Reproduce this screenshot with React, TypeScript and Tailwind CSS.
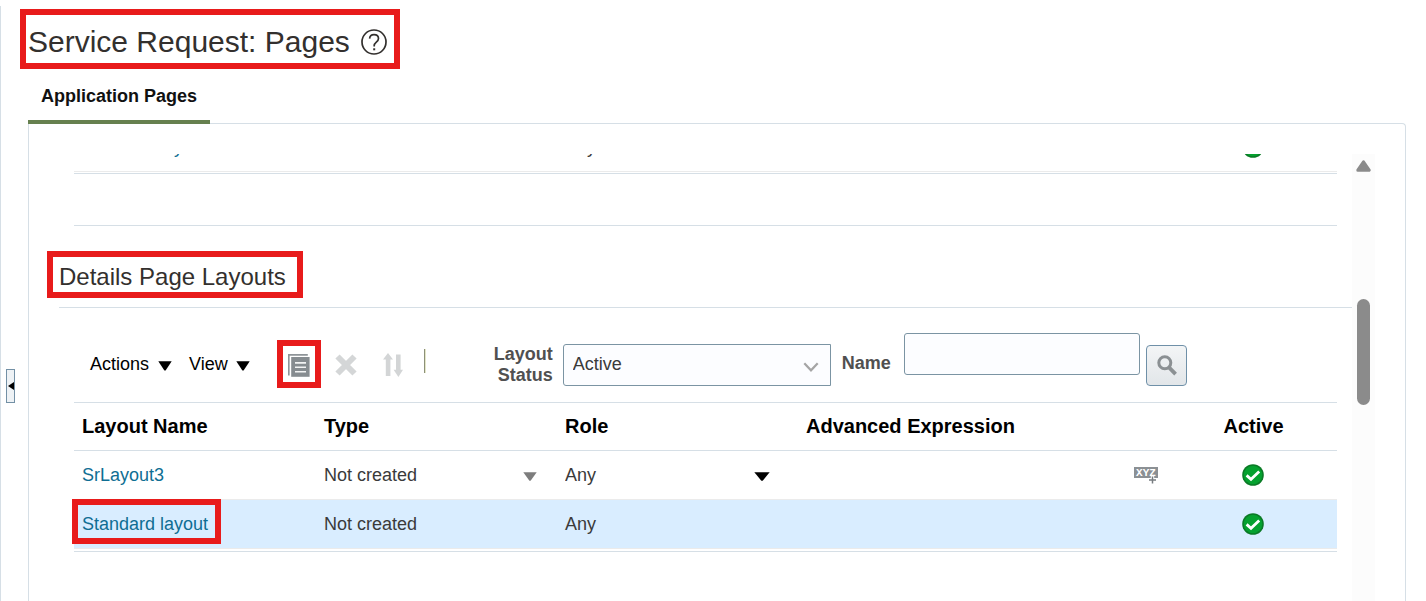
import React from "react";

type Layout = { id: string; name: string; type: string; role: string };

const layouts: Layout[] = [
  { id: "sr3", name: "SrLayout3", type: "Not created", role: "Any" },
  { id: "std", name: "Standard layout", type: "Not created", role: "Any" },
];

function CaretDown({ className }: { className: string }) {
  return (
    <svg viewBox="0 0 14 10" preserveAspectRatio="none" className={className} aria-hidden="true">
      <path d="M0.3 0.3h13.4L7.6 9.6H6.4z" fill="currentColor" />
    </svg>
  );
}

function ActiveIcon() {
  return (
    <svg viewBox="0 0 22 22" className="mx-auto block h-[22px] w-[22px]" role="img" aria-label="Active">
      <circle cx="11" cy="11" r="10.8" fill="#0b7a26" />
      <circle cx="11" cy="11" r="9.3" fill="#05a12f" />
      <path d="M4.6 11.4 9 15.3 17.2 7.6" fill="none" stroke="#fff" strokeWidth="2.8" />
    </svg>
  );
}

function HelpIcon() {
  return (
    <svg viewBox="0 0 26 26" className="h-[26px] w-[26px]" fill="none" stroke="#33302e" aria-hidden="true">
      <circle cx="13" cy="13" r="12" strokeWidth="1.7" />
      <path d="M8.6 9.6C8.8 7 10.6 5.7 13 5.7c2.6 0 4.5 1.5 4.5 3.9 0 3.4-4.3 3.7-4.3 7v1" strokeWidth="1.7" />
      <path d="M12.2 20.3h2" strokeWidth="2" />
    </svg>
  );
}

function CreateIcon() {
  return (
    <svg viewBox="0 0 22 23" className="h-[23px] w-[22px]" aria-hidden="true">
      <path d="M0.8 21.5V0.9h19" fill="none" stroke="#8e9498" strokeWidth="1.7" />
      <path d="M3.2 3h18.4v19.8H3.2z" fill="#868c90" />
      <path d="M7 8.9h11M7 13.2h11M7 17.7h11" stroke="#f2f3f3" strokeWidth="1.6" />
    </svg>
  );
}

function DeleteIcon() {
  return (
    <svg viewBox="0 0 22 22" className="h-[22px] w-[22px]" aria-hidden="true">
      <path d="M2.5 2.5 19.5 19.5M19.5 2.5 2.5 19.5" stroke="#d4d6d7" strokeWidth="6" />
    </svg>
  );
}

function ReorderIcon() {
  return (
    <svg viewBox="0 0 20 24" className="h-6 w-5" fill="#d3d5d6" aria-hidden="true">
      <path d="M5 0 10 6.6H7.4V23H2.8V6.6H0zM13 1.5h4.6v15.2H20L15.4 24l-4.8-7.3H13z" />
    </svg>
  );
}

function SearchIcon() {
  return (
    <svg viewBox="0 0 20 21" className="h-[21px] w-5" fill="none" stroke="#8b9093" aria-hidden="true">
      <circle cx="7.8" cy="7.8" r="6" strokeWidth="3" />
      <path d="M12.2 12.7 18.6 19.2" strokeWidth="3.8" />
    </svg>
  );
}

function ExpressionIcon() {
  return (
    <svg viewBox="0 0 24 18" className="h-[18px] w-6" aria-hidden="true">
      <path d="M0 1h24v11H0z" fill="#8b9094" />
      <text x="12" y="10.4" textAnchor="middle" fill="#fff" fontSize="11" fontWeight="700" fontFamily="Liberation Mono, monospace">
        XYZ
      </text>
      <path d="M14.5 14h8M18.5 10v8" stroke="#fff" strokeWidth="3.4" />
      <path d="M15 14h7M18.5 10.6V17.6" stroke="#777c80" strokeWidth="1.5" />
    </svg>
  );
}

function Columns() {
  return (
    <colgroup>
      <col className="w-[242px]" />
      <col className="w-[241px]" />
      <col className="w-[241px]" />
      <col />
      <col className="w-[167px]" />
    </colgroup>
  );
}

function CellSelect({ label, value, children, className }: { label: string; value: string; children: React.ReactNode; className: string }) {
  return (
    <span className={"grid items-center " + className}>
      <select aria-label={label} defaultValue={value} className="col-start-1 row-start-1 w-full appearance-none bg-transparent">
        <option>{value}</option>
      </select>
      <span className="pointer-events-none col-start-1 row-start-1 justify-self-end pt-1">{children}</span>
    </span>
  );
}

export default function App() {
  return (
    <div className="flex min-h-screen bg-white font-['Liberation_Sans',Arial,sans-serif] text-lg leading-6 text-[#3a3a3a]">
      <aside className="mt-[6px] w-5 shrink-0 border-l border-[#d6dfe6] pt-[363px] pl-[5px]">
        <button aria-label="Collapse pane" className="flex h-[34px] w-[9px] items-center justify-end border border-[#7390a5] bg-[#eef2f5]">
          <svg viewBox="0 0 6 8" className="h-2 w-[6px]" aria-hidden="true">
            <path d="M0 4 6 0v8z" fill="#000" />
          </svg>
        </button>
      </aside>

      <main className="flex min-w-0 grow flex-col pt-[9px] pr-5">
        <header className="flex h-[60px] w-fit items-center gap-[11px] border-6 border-[#e81b1b] pt-[6px] pr-[7px] pl-[2px]">
          <h1 className="pb-[1px] text-[30px] leading-10 whitespace-nowrap text-[#33302e]">Service Request: Pages</h1>
          <button aria-label="Help">
            <HelpIcon />
          </button>
        </header>

        <nav className="z-10 mt-[13px] -mb-px ml-2 flex">
          <a href="#application-pages" className="h-[42px] border-b-4 border-[#66804f] px-[13px] pt-[2px] font-bold text-[#111]">
            Application Pages
          </a>
        </nav>

        <section className="ml-2 flex grow rounded-tr border-x border-t border-[#d6dfe6] pt-[30px] pr-[30px]">
          <div className="min-w-0 grow pl-[18px]">
            <div className="mr-[15px] ml-[27px] border-b border-[#d6dfe6] pb-px">
              <div className="flex h-[18px] items-end overflow-hidden">
                <table aria-label="Page layouts" className="w-full table-fixed">
                  <Columns />
                  <tbody>
                    <tr className="h-[49px] border-b border-[#ebebeb]">
                      <td className="px-2">
                        <a href="#layout" className="text-[#0f6e93]">Standard layout</a>
                      </td>
                      <td className="px-2">Not created</td>
                      <td className="px-2">Any</td>
                      <td />
                      <td className="pr-[2px]">
                        <ActiveIcon />
                      </td>
                    </tr>
                  </tbody>
                </table>
              </div>
            </div>
            <div className="mr-[15px] ml-[27px] h-[52px] border-b border-[#d6dfe6]" />

            <h2 className="mt-[25px] flex h-[47px] w-fit items-center border-6 border-[#e81b1b] pt-1 pr-[11px] pl-[6px] text-2xl text-[#33302e]">
              Details Page Layouts
            </h2>

            <div className="mt-[9px] ml-3 border-t border-[#d6dfe6] pr-[15px] pl-[15px]">
              <div className="flex pt-[25px] pb-[5px] pl-4">
                <div className="flex h-16 items-center whitespace-nowrap">
                  <button className="flex items-center gap-[9px] pb-[2px] text-black">
                    Actions <CaretDown className="mt-1 h-[10px] w-[14px]" />
                  </button>
                  <button className="ml-[17px] flex items-center gap-2 pb-[2px] text-black">
                    View <CaretDown className="mt-1 h-[10px] w-[14px]" />
                  </button>
                  <button aria-label="Create" className="mb-[2px] ml-[27px] flex h-12 w-11 items-center justify-center border-6 border-[#e81b1b] pt-[2px]">
                    <CreateIcon />
                  </button>
                  <button aria-label="Delete" className="ml-[14px]">
                    <DeleteIcon />
                  </button>
                  <button aria-label="Reorder" className="ml-[26px]">
                    <ReorderIcon />
                  </button>
                  <span className="mb-2 ml-[21px] h-6 w-[2px] border-r border-l border-r-[#e4e6c8] border-l-[#8c9078]" />
                  <label htmlFor="status" className="ml-[65px] w-[62px] text-right leading-[21px] font-bold whitespace-normal text-[#505050]">
                    Layout Status
                  </label>
                  <span className="ml-[10px] grid w-[268px] items-center">
                    <select id="status" defaultValue="Active" className="col-start-1 row-start-1 h-[42px] w-full appearance-none rounded-l-[3px] border border-[#7b94a3] bg-[#fcfdff] pb-[2px] pl-[9px]">
                      <option>Active</option>
                      <option>Inactive</option>
                    </select>
                    <svg viewBox="0 0 16 10" className="pointer-events-none col-start-1 row-start-1 mt-[3px] mr-3 h-[10px] w-4 justify-self-end" aria-hidden="true">
                      <path d="M1.3 1.3 8 8.3l6.7-7" fill="none" stroke="#a5a5a5" strokeWidth="2.2" />
                    </svg>
                  </span>
                  <label htmlFor="name" className="ml-[11px] pb-1 font-bold text-[#505050]">
                    Name
                  </label>
                  <input id="name" type="text" className="ml-[13px] h-[42px] w-[236px] self-start rounded-[3px] border border-[#7b94a3] bg-[#fcfdff] px-2" />
                  <button aria-label="Search" className="ml-[6px] flex h-[41px] w-[41px] items-center justify-center rounded-[4px] border border-[#6f90a8] bg-linear-to-b from-[#f3f5f6] to-[#e2e6e9] pl-[2px]">
                    <SearchIcon />
                  </button>
                </div>
              </div>

              <div className="border-y border-[#d6dfe6] pb-[2px]">
                <table aria-label="Details page layouts" className="w-full table-fixed text-left">
                  <Columns />
                  <thead>
                    <tr className="h-[47px] border-b border-[#d6dfe6] text-xl text-black">
                      <th className="px-2">Layout Name</th>
                      <th className="px-2">Type</th>
                      <th className="px-2">Role</th>
                      <th className="px-2">Advanced Expression</th>
                      <th className="text-center">Active</th>
                    </tr>
                  </thead>
                  <tbody>
                    {layouts.map((layout) => {
                      const selected = layout.id === "std";
                      return (
                        <tr key={layout.id} className={selected ? "h-[49px] border-b border-[#ebebeb] bg-[#d9edff]" : "h-[49px] border-b border-[#ebebeb]"}>
                          <td className="px-2">
                            <a href="#layout" className="relative inline-block text-[#0f6e93]">
                              {layout.name}
                              {selected && <span className="absolute -top-[13px] -right-[13px] -bottom-2 -left-[10px] border-6 border-[#e81b1b]" />}
                            </a>
                          </td>
                          <td className="px-2">
                            {selected ? layout.type : (
                              <CellSelect label="Type" value={layout.type} className="w-[213px]">
                                <CaretDown className="h-[9px] w-[14px] text-[#7d7d7d]" />
                              </CellSelect>
                            )}
                          </td>
                          <td className="px-2">
                            {selected ? layout.role : (
                              <CellSelect label="Role" value={layout.role} className="w-[205px]">
                                <CaretDown className="h-[9px] w-4 text-black" />
                              </CellSelect>
                            )}
                          </td>
                          <td>
                            {!selected && (
                              <button aria-label="Edit expression" className="mr-3 ml-auto block">
                                <ExpressionIcon />
                              </button>
                            )}
                          </td>
                          <td className="pr-[2px]">
                            <ActiveIcon />
                          </td>
                        </tr>
                      );
                    })}
                  </tbody>
                </table>
              </div>
            </div>
          </div>

          <div className="flex w-[23px] shrink-0 flex-col items-center bg-[#fcfcfc] pt-[6px]" aria-hidden="true">
            <svg viewBox="0 0 15 12" className="h-3 w-[15px]">
              <path d="M7.5 1.8 13.2 10.2H1.8z" fill="#8b8b8b" stroke="#8b8b8b" strokeWidth="3" strokeLinejoin="round" />
            </svg>
            <div className="mt-[127px] h-[106px] w-[13px] rounded-full bg-[#8b8b8b]" />
          </div>
        </section>
      </main>
    </div>
  );
}
